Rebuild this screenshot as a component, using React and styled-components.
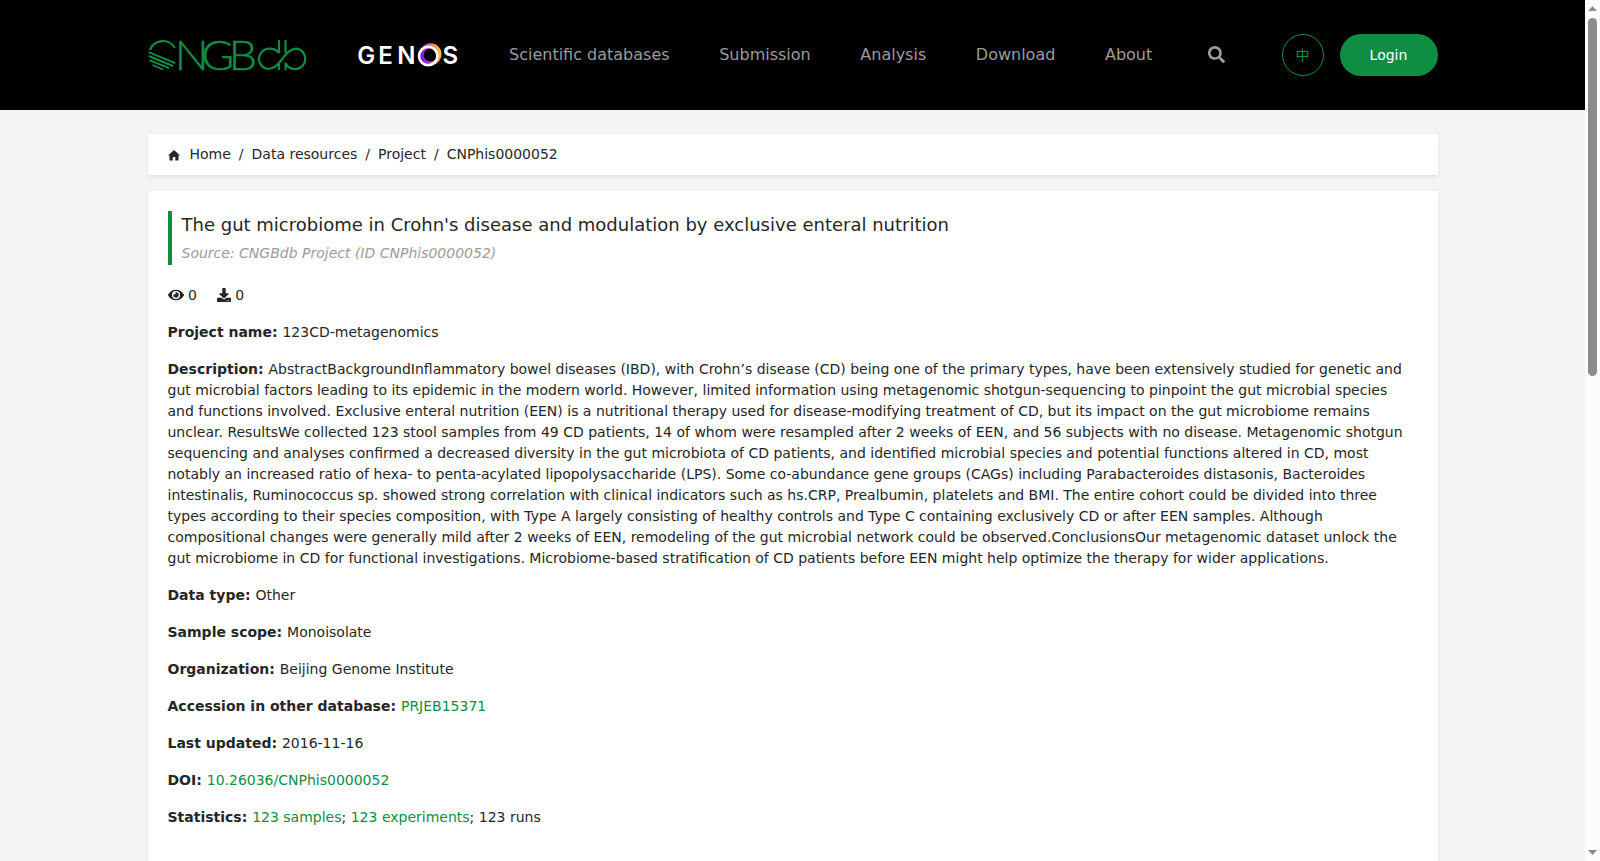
import React from "react";
import styled, { createGlobalStyle } from "styled-components";
import { FaSearch, FaEye, FaDownload } from "react-icons/fa";

const Green = "#0f8e43";

const menu = [
  "Scientific databases",
  "Submission",
  "Analysis",
  "Download",
  "About",
];

const crumbs = ["Home", "Data resources", "Project", "CNPhis0000052"];

const description =
  "AbstractBackgroundInflammatory bowel diseases (IBD), with Crohn’s disease (CD) being one of the primary types, have been extensively studied for genetic and gut microbial factors leading to its epidemic in the modern world. However, limited information using metagenomic shotgun-sequencing to pinpoint the gut microbial species and functions involved. Exclusive enteral nutrition (EEN) is a nutritional therapy used for disease-modifying treatment of CD, but its impact on the gut microbiome remains unclear. ResultsWe collected 123 stool samples from 49 CD patients, 14 of whom were resampled after 2 weeks of EEN, and 56 subjects with no disease. Metagenomic shotgun sequencing and analyses confirmed a decreased diversity in the gut microbiota of CD patients, and identified microbial species and potential functions altered in CD, most notably an increased ratio of hexa- to penta-acylated lipopolysaccharide (LPS). Some co-abundance gene groups (CAGs) including Parabacteroides distasonis, Bacteroides intestinalis, Ruminococcus sp. showed strong correlation with clinical indicators such as hs.CRP, Prealbumin, platelets and BMI. The entire cohort could be divided into three types according to their species composition, with Type A largely consisting of healthy controls and Type C containing exclusively CD or after EEN samples. Although compositional changes were generally mild after 2 weeks of EEN, remodeling of the gut microbial network could be observed.ConclusionsOur metagenomic dataset unlock the gut microbiome in CD for functional investigations. Microbiome-based stratification of CD patients before EEN might help optimize the therapy for wider applications.";

const fields = [
  { label: "Project name", value: "123CD-metagenomics" },
  { label: "Description", value: description },
  { label: "Data type", value: "Other" },
  { label: "Sample scope", value: "Monoisolate" },
  { label: "Organization", value: "Beijing Genome Institute" },
  {
    label: "Accession in other database",
    value: <Anchor>PRJEB15371</Anchor>,
  },
  { label: "Last updated", value: "2016-11-16" },
  { label: "DOI", value: <Anchor>10.26036/CNPhis0000052</Anchor> },
  {
    label: "Statistics",
    value: (
      <>
        <Anchor>123 samples</Anchor>; <Anchor>123 experiments</Anchor>; 123 runs
      </>
    ),
  },
];

function Anchor({ children }) {
  return <Link href="#">{children}</Link>;
}

// striped globe on the left, infinity loop on the right
const CngbLogo = () => (
  <Cngb viewBox="0 0 160 32">
    <g fill="none" stroke={Green} strokeWidth="2.2">
      <path d="M2 11A13.700 13.700 0 0 1 26.800 9" />
      <path
        d="M0.500 13.200L27.300 24.200M0.700 17L25 27M1.500 21.200L21 29.200M4.500 26L15 30.500"
        strokeWidth="1.900"
      />
      <path d="M131 1V14M137.500 1V14M131 14A11 10.300 0 1 0 120 30C133 30 135.500 9.700 149 9.700A10.300 10.300 0 1 1 137.500 24V31M131 25V31" />
    </g>
    <text x="24.800 49.300 74.800" y="30.500" transform="scale(1.08 1)">
      NGB
    </text>
  </Cngb>
);

const GenosLogo = () => (
  <Genos viewBox="0 0 100 26">
    <defs>
      <linearGradient id="ring" x1="0" y1="0.600" x2="1" y2="0.400">
        <stop offset="0" stopColor="#6a00ff" />
        <stop offset="0.400" stopColor="#c04ad0" />
        <stop offset="0.700" stopColor="#ff8a5c" />
        <stop offset="1" stopColor="#ffc83a" />
      </linearGradient>
    </defs>
    <text x="-0.800 20.300 39.300" y="23.300">
      GEN
    </text>
    <circle cx="72.500" cy="13.300" r="11" fill="url(#ring)" />
    <circle cx="72.300" cy="14" r="6.600" fill="#000" />
    <circle
      cx="70.200"
      cy="15"
      r="9.200"
      fill="none"
      stroke="#fff"
      strokeWidth="2.600"
    />
    <text x="84.500" y="23.300">
      S
    </text>
  </Genos>
);

const App = () => (
  <>
    <GlobalStyle />
    <Screen>
      <Page>
        <Header>
          <CngbLogo />
          <GenosLogo />
          <Nav>
            {menu.map((item) => (
              <NavItem key={item} href="#">
                {item}
              </NavItem>
            ))}
          </Nav>
          <Search />
          <Lang>中</Lang>
          <Login>Login</Login>
        </Header>
        <Breadcrumb>
          <Home viewBox="0 0 12 11">
            <path d="M6 0L12 5.500H10.500V10.500H7.300V7H4.700V10.500H1.500V5.500H0z" />
          </Home>
          {crumbs.map((crumb, i) => (
            <React.Fragment key={crumb}>
              {i > 0 && <Slash>/</Slash>}
              <span>{crumb}</span>
            </React.Fragment>
          ))}
        </Breadcrumb>
        <Card>
          <Heading>
            <Title>
              The gut microbiome in Crohn's disease and modulation by exclusive
              enteral nutrition
            </Title>
            <Source>Source: CNGBdb Project (ID CNPhis0000052)</Source>
          </Heading>
          <Counters>
            <Counter>
              <FaEye size={16} /> 0
            </Counter>
            <Counter>
              <FaDownload size={14} /> 0
            </Counter>
          </Counters>
          {fields.map(({ label, value }) => (
            <Field key={label}>
              <b>{label}: </b>
              {value}
            </Field>
          ))}
        </Card>
      </Page>
      <Scrollbar>
        <Arrow viewBox="0 0 9 5">
          <path d="M4.500 0L9 5H0z" />
        </Arrow>
        <Thumb />
        <Arrow viewBox="0 0 9 5">
          <path d="M0 0H9L4.500 5z" />
        </Arrow>
      </Scrollbar>
    </Screen>
  </>
);

export default App;

const GlobalStyle = createGlobalStyle`
  * {
    box-sizing: border-box;
  }

  body {
    margin: 0;
    overflow: hidden;
    color: #262626;
    background-color: #f4f4f4;
    font: 14px/21px "DejaVu Sans", "Noto Sans CJK SC", sans-serif;
  }
`;

const Screen = styled.div`
  display: flex;
  height: 861px;
  overflow: hidden;
`;

const Page = styled.main`
  flex: 1;
  display: flex;
  flex-direction: column;
`;

const Header = styled.header`
  flex: none;
  display: flex;
  align-items: center;
  height: 110px;
  padding: 0 147.5px;
  background-color: #000;
`;

const Cngb = styled.svg`
  width: 160px;
  height: 32px;
  margin-right: 50px;
  overflow: visible;
  fill: ${Green};

  text {
    font: 300 41.5px Lato, sans-serif;
    stroke: ${Green};
    stroke-width: 0.5px;
  }
`;

const Genos = styled.svg`
  width: 100px;
  height: 26px;
  margin: 0 51.5px 2px 0;
  overflow: visible;
  fill: #fff;
  font: 600 24px Inter, sans-serif;
`;

const Nav = styled.nav`
  display: flex;
  gap: 49.6px;
`;

const NavItem = styled.a`
  color: #9b9b9b;
  font-size: 16px;
  line-height: 24px;
  text-decoration: none;
`;

const Search = styled(FaSearch)`
  width: 17px;
  height: 17px;
  margin: 0 0 1px 56px;
  color: #9b9b9b;
`;

const Lang = styled.button`
  width: 42px;
  height: 42px;
  margin-left: auto;
  padding: 0;
  border: 1px solid ${Green};
  border-radius: 50%;
  background: none;
  color: ${Green};
  font: inherit;
`;

const Login = styled.button`
  width: 98px;
  height: 42px;
  margin-left: 16px;
  padding: 0;
  border: 0;
  border-radius: 21px;
  background-color: ${Green};
  color: #fff;
  font: inherit;
`;

const Panel = styled.section`
  margin: 0 147.5px;
  background-color: #fff;
  box-shadow: 0 2px 4px rgba(0, 0, 0, 0.08);
`;

const Breadcrumb = styled(Panel)`
  flex: none;
  display: flex;
  align-items: center;
  height: 41px;
  margin-top: 24px;
  padding: 0 20px;
`;

const Home = styled.svg`
  width: 12px;
  height: 11px;
  margin: 1px 9.5px 0 0.5px;
  fill: #262626;
`;

const Slash = styled.span`
  margin: 0 8px;
`;

const Card = styled(Panel)`
  flex: 1;
  margin-top: 16px;
  padding: 20px;
`;

const Heading = styled.div`
  height: 54px;
  padding-left: 10px;
  border-left: 4px solid ${Green};
`;

const Title = styled.h1`
  margin: 0;
  font-size: 18px;
  font-weight: 400;
  line-height: 27px;
`;

const Source = styled.p`
  margin: 0;
  padding-top: 5px;
  color: #9b9b9b;
  font-style: italic;
`;

const Counters = styled.div`
  display: flex;
  gap: 20px;
  margin: 20px 0 16px;
`;

const Counter = styled.span`
  display: flex;
  align-items: center;
  gap: 4.4px;

  svg {
    margin-top: -1px;
  }
`;

const Field = styled.p`
  margin: 0 0 16px;
`;

const Link = styled.a`
  color: ${Green};
  text-decoration: none;
`;

const Scrollbar = styled.div`
  width: 15px;
  display: flex;
  flex-direction: column;
  align-items: center;
  padding: 6px 0;
  background-color: #fcfcfc;
`;

const Arrow = styled.svg`
  width: 9px;
  height: 5px;
  fill: #8b8b8b;
`;

const Thumb = styled.div`
  width: 9px;
  height: 358px;
  margin: 7px 0 auto;
  border-radius: 5px;
  background-color: #8b8b8b;
`;
